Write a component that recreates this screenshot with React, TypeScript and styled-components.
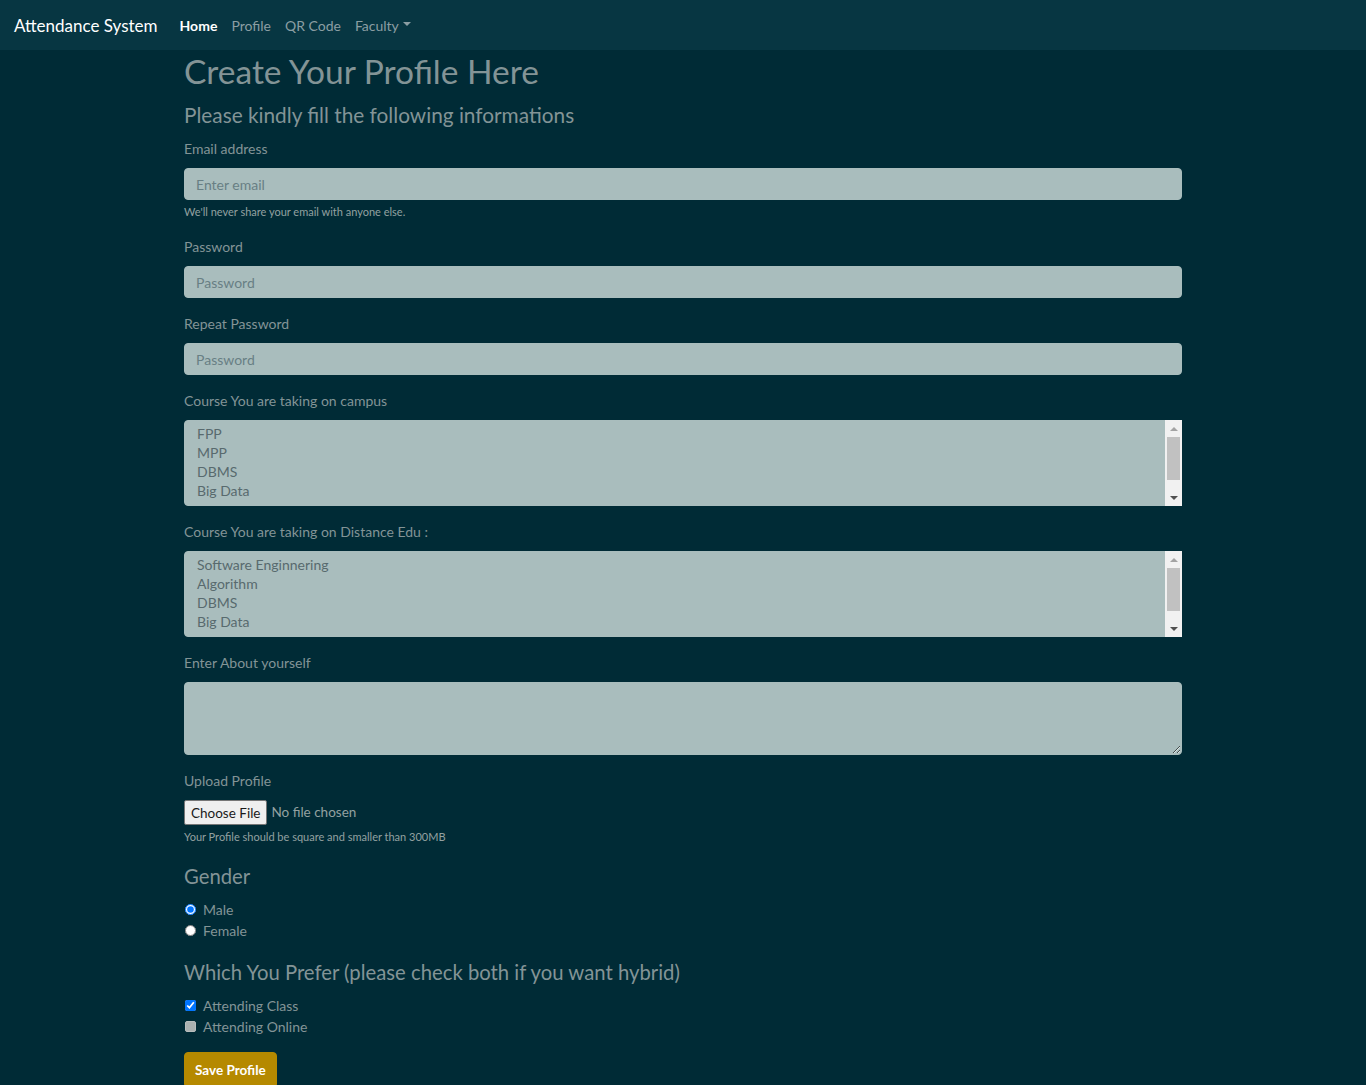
import React from "react";
import styled, { createGlobalStyle, css } from "styled-components";

const GlobalStyle = createGlobalStyle`
  html, body {
    margin: 0;
    padding: 0;
    background: #002b36;
  }
  body {
    font-family: "Lato", "Noto Sans", sans-serif;
    font-size: 15px;
    line-height: 1.5;
    color: #839496;
  }
  * { box-sizing: border-box; }
`;

const Navbar = styled.nav`
  display: flex;
  align-items: center;
  height: 50px;
  padding: 0 14px;
  background: #073642;
`;

const Brand = styled.a`
  font-size: 17px;
  color: #ffffff;
  text-decoration: none;
  margin-right: 15px;
  line-height: 1;
`;

const NavList = styled.ul`
  display: flex;
  list-style: none;
  margin: 0;
  padding: 0;
`;

const NavLink = styled.a<{ $active?: boolean; $dropdown?: boolean }>`
  display: flex;
  align-items: center;
  padding: 0 7px;
  font-size: 14px;
  text-decoration: none;
  color: ${(p) => (p.$active ? "#ffffff" : "#8b9ea3")};
  font-weight: ${(p) => (p.$active ? 700 : 400)};
  ${(p) =>
    p.$dropdown &&
    css`
      &::after {
        content: "";
        display: inline-block;
        margin-left: 4px;
        margin-top: -2px;
        border-top: 4.5px solid #8b9ea3;
        border-left: 4px solid transparent;
        border-right: 4px solid transparent;
      }
    `}
`;

const Container = styled.main`
  max-width: 998px;
  margin: 0 auto;
  padding-bottom: 30px;
`;

const Title = styled.h1`
  margin: 0 0 7px;
  font-size: 33.5px;
  font-weight: 400;
  line-height: 42px;
  color: #839496;
`;

const Subtitle = styled.h3`
  margin: 0 0 8px;
  font-size: 20.8px;
  font-weight: 400;
  line-height: 31px;
  color: #839496;
`;

const SectionHeading = styled.h4`
  margin: 0 0 9px;
  font-size: 20.3px;
  font-weight: 400;
  line-height: 27px;
  color: #839496;
`;

const FormGroup = styled.div<{ $gap?: number }>`
  margin-bottom: ${(p) => p.$gap ?? 15}px;
`;

const Label = styled.label`
  display: block;
  font-size: 14px;
  line-height: 22px;
  margin-bottom: 8px;
`;

const fieldBase = css`
  display: block;
  width: 100%;
  border: 1px solid #a9bdbd;
  border-radius: 4px;
  background: #a9bdbd;
  color: #586e75;
  font-family: inherit;
  font-size: 14px;
  outline: none;
`;

const TextInput = styled.input`
  ${fieldBase}
  height: 32px;
  padding: 0 11px;
  &::placeholder {
    color: #687f84;
  }
`;

const HelpText = styled.small`
  display: block;
  margin-top: 3px;
  font-size: 11px;
  line-height: 18px;
  color: #93a1a1;
`;

const SelectBox = styled.div`
  position: relative;
`;

const MultiSelect = styled.select`
  ${fieldBase}
  height: 86px;
  padding: 2px 10px;
  overflow-y: hidden;
  scrollbar-width: none;
  color: #586a6e;
  &::-webkit-scrollbar {
    display: none;
  }
  option {
    padding: 2px 2px 0;
  }
`;

const ScrollTrack = styled.div`
  position: absolute;
  top: 0;
  right: 0;
  bottom: 0;
  width: 17px;
  display: flex;
  flex-direction: column;
  background: #f1f1f1;
  pointer-events: none;
`;

const ScrollArrow = styled.div<{ $dir: "up" | "down"; $active?: boolean }>`
  height: 17px;
  display: flex;
  align-items: center;
  justify-content: center;
  &::before {
    content: "";
    border-left: 4px solid transparent;
    border-right: 4px solid transparent;
    ${(p) =>
      p.$dir === "up"
        ? css`
            border-bottom: 4px solid ${p.$active ? "#505050" : "#a3a3a3"};
          `
        : css`
            border-top: 4px solid ${p.$active ? "#505050" : "#a3a3a3"};
          `}
  }
`;

const ScrollThumb = styled.div`
  height: 43px;
  margin: 0 2px;
  background: #c1c1c1;
`;

const ScrollSpace = styled.div`
  flex: 1;
`;

const TextArea = styled.textarea`
  ${fieldBase}
  height: 73px;
  padding: 6px 11px;
  resize: vertical;
`;

const FileRow = styled.div`
  display: flex;
  align-items: center;
  gap: 4px;
`;

const FileButton = styled.button`
  height: 25px;
  padding: 0 6px;
  border: 1px solid #767676;
  border-radius: 2px;
  background: #efefef;
  color: #1a1a1a;
  font-family: inherit;
  font-size: 13.5px;
`;

const FileName = styled.span`
  font-size: 13.5px;
  color: #93a1a1;
`;

const CheckRow = styled.div`
  display: flex;
  align-items: center;
  height: 21px;
  font-size: 14px;
`;

const Radio = styled.input.attrs({ type: "radio" })`
  width: 11px;
  height: 11px;
  margin: 0 7px 0 1px;
`;

const Checkbox = styled.input.attrs({ type: "checkbox" })<{ $muted?: boolean }>`
  width: 11px;
  height: 11px;
  margin: 0 7px 0 1px;
  ${(p) =>
    p.$muted &&
    css`
      appearance: none;
      background: #aab1b1;
      border: 1px solid #b8bdbd;
      border-radius: 2px;
    `}
`;

const SubmitButton = styled.button`
  margin-top: 15px;
  height: 36px;
  padding: 0 10px;
  border: 1px solid #b58900;
  border-radius: 4px;
  background: #b58900;
  color: #ffffff;
  font-family: inherit;
  font-size: 13.5px;
  font-weight: 700;
`;

const campusCourses = [
  "FPP",
  "MPP",
  "DBMS",
  "Big Data",
  "Web Application Programming",
  "Enterprise Architecture",
  "Software Enginnering",
];

const distanceCourses = [
  "Software Enginnering",
  "Algorithm",
  "DBMS",
  "Big Data",
  "Web Application Programming",
  "Modern Programming Practice",
  "Machine Learning",
];

function CourseSelect({ id, courses }: { id: string; courses: string[] }) {
  return (
    <SelectBox>
      <MultiSelect id={id} multiple>
        {courses.map((c) => (
          <option key={c}>{c}</option>
        ))}
      </MultiSelect>
      <ScrollTrack aria-hidden>
        <ScrollArrow $dir="up" />
        <ScrollThumb />
        <ScrollSpace />
        <ScrollArrow $dir="down" $active />
      </ScrollTrack>
    </SelectBox>
  );
}

export default function App() {
  return (
    <>
      <GlobalStyle />
      <Navbar>
        <Brand href="#">Attendance System</Brand>
        <NavList>
          <li>
            <NavLink href="#" $active>
              Home
            </NavLink>
          </li>
          <li>
            <NavLink href="#">Profile</NavLink>
          </li>
          <li>
            <NavLink href="#">QR Code</NavLink>
          </li>
          <li>
            <NavLink href="#" $dropdown>
              Faculty
            </NavLink>
          </li>
        </NavList>
      </Navbar>
      <Container>
        <Title>Create Your Profile Here</Title>
        <Subtitle>Please kindly fill the following informations</Subtitle>
        <form onSubmit={(e) => e.preventDefault()}>
          <FormGroup>
            <Label htmlFor="email">Email address</Label>
            <TextInput id="email" type="email" placeholder="Enter email" />
            <HelpText>We'll never share your email with anyone else.</HelpText>
          </FormGroup>
          <FormGroup>
            <Label htmlFor="pw">Password</Label>
            <TextInput id="pw" type="password" placeholder="Password" />
          </FormGroup>
          <FormGroup>
            <Label htmlFor="pw2">Repeat Password</Label>
            <TextInput id="pw2" type="password" placeholder="Password" />
          </FormGroup>
          <FormGroup>
            <Label htmlFor="campus">Course You are taking on campus</Label>
            <CourseSelect id="campus" courses={campusCourses} />
          </FormGroup>
          <FormGroup>
            <Label htmlFor="distance">Course You are taking on Distance Edu :</Label>
            <CourseSelect id="distance" courses={distanceCourses} />
          </FormGroup>
          <FormGroup>
            <Label htmlFor="about">Enter About yourself</Label>
            <TextArea id="about" />
          </FormGroup>
          <FormGroup $gap={17}>
            <Label>Upload Profile</Label>
            <FileRow>
              <FileButton type="button">Choose File</FileButton>
              <FileName>No file chosen</FileName>
            </FileRow>
            <HelpText>Your Profile should be square and smaller than 300MB</HelpText>
          </FormGroup>
          <FormGroup $gap={18}>
            <SectionHeading>Gender</SectionHeading>
            <CheckRow>
              <Radio name="gender" id="male" defaultChecked />
              <label htmlFor="male">Male</label>
            </CheckRow>
            <CheckRow>
              <Radio name="gender" id="female" />
              <label htmlFor="female">Female</label>
            </CheckRow>
          </FormGroup>
          <FormGroup $gap={0}>
            <SectionHeading>Which You Prefer (please check both if you want hybrid)</SectionHeading>
            <CheckRow>
              <Checkbox id="class" defaultChecked />
              <label htmlFor="class">Attending Class</label>
            </CheckRow>
            <CheckRow>
              <Checkbox id="online" $muted />
              <label htmlFor="online">Attending Online</label>
            </CheckRow>
          </FormGroup>
          <SubmitButton type="submit">Save Profile</SubmitButton>
        </form>
      </Container>
    </>
  );
}
